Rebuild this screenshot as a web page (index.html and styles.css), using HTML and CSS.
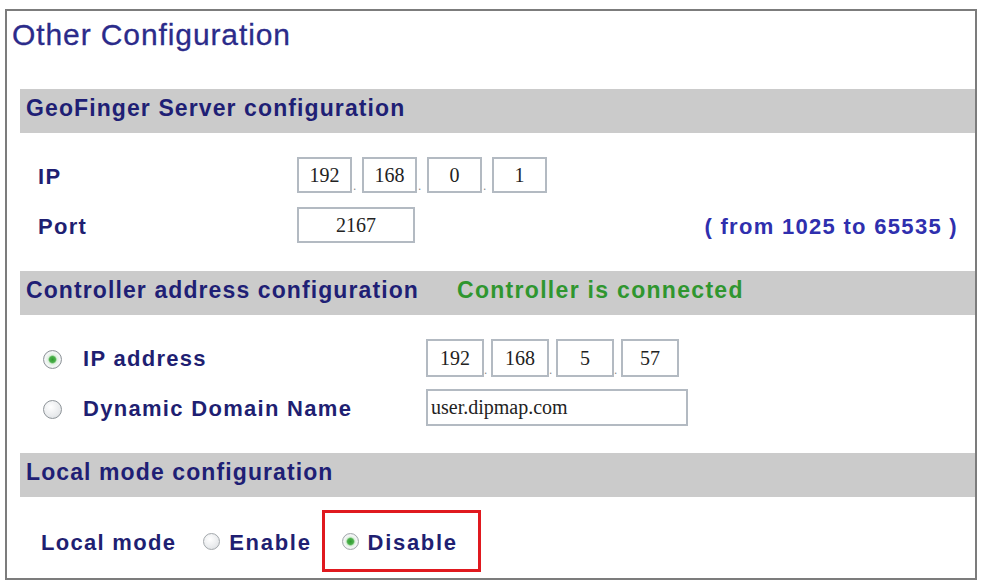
FILE: index.html
```html
<!DOCTYPE html>
<html lang="en">
  <head>
    <meta charset="UTF-8" />
    <meta name="viewport" content="width=device-width, initial-scale=1.0" />
    <link rel="stylesheet" href="styles.css">
    <title>Other Configuration</title>
  </head>
  <body>
    <div class="panel">
      <h1 class="title">Other Configuration</h1>

      <div class="bar first"><span>GeoFinger Server configuration</span></div>

      <div class="row">
        <label class="label">IP</label>
        <div class="ip">
          <input class="oct" type="text" value="192" /><span class="dot">.</span>
          <input class="oct" type="text" value="168" /><span class="dot">.</span>
          <input class="oct" type="text" value="0" /><span class="dot">.</span>
          <input class="oct" type="text" value="1" />
        </div>
      </div>
      <div class="row">
        <label class="label">Port</label>
        <input class="port" type="text" value="2167" />
        <span class="range">( from 1025 to 65535 )</span>
      </div>

      <div class="bar">
        <span>Controller address configuration</span>
        <span class="status">Controller is connected</span>
      </div>

      <div class="row ctrl">
        <input class="radio" type="radio" name="addr" id="byip" checked />
        <label class="label" for="byip">IP address</label>
        <div class="ip wide">
          <input class="oct" type="text" value="192" /><span class="dot">.</span>
          <input class="oct" type="text" value="168" /><span class="dot">.</span>
          <input class="oct" type="text" value="5" /><span class="dot">.</span>
          <input class="oct" type="text" value="57" />
        </div>
      </div>
      <div class="row ctrl">
        <input class="radio" type="radio" name="addr" id="byname" />
        <label class="label" for="byname">Dynamic Domain Name</label>
        <input class="domain" type="text" value="user.dipmap.com" />
      </div>

      <div class="bar"><span>Local mode configuration</span></div>

      <div class="local">
        <span class="local-label">Local mode</span>
        <input class="radio small" type="radio" name="local" id="enable" />
        <label for="enable" class="opt">Enable</label>
        <div class="mark">
          <input class="radio small" type="radio" name="local" id="disable" checked />
          <label for="disable" class="opt">Disable</label>
        </div>
      </div>
    </div>
  </body>
</html>
```

FILE: styles.css
```css
* {
  margin: 0;
  padding: 0;
  box-sizing: border-box;
}
body {
  background-color: #fff;
  font-family: "Liberation Sans", Arial, sans-serif;
}
.panel {
  margin: 9px 0 0 5px;
  width: 972px;
  border: 2px solid #7c7c7c;
  padding-bottom: 6px;
}
.title {
  font-size: 30px;
  font-weight: normal;
  line-height: 34px;
  padding: 7px 0 0 5px;
  color: #2b2b8a;
  letter-spacing: 0.9px;
  -webkit-text-stroke: 0.3px #2b2b8a;
}
.bar {
  display: flex;
  margin: 24px 0 0 13px;
  height: 44px;
  line-height: 39px;
  padding: 0 0 5px 6px;
  background-color: #cbcbcb;
  color: #1f1f75;
  font-size: 23px;
  font-weight: bold;
  letter-spacing: 1.1px;
  white-space: nowrap;
}
.bar.first {
  margin-top: 37px;
}
.bar .status {
  margin-left: 38px;
  color: #2f962f;
  letter-spacing: 1.3px;
}
.row {
  display: flex;
  align-items: flex-start;
  margin-top: 10px;
  padding: 0 17px 0 31px;
}
.bar + .row {
  margin-top: 24px;
}
.label {
  width: 259px;
  line-height: 40px;
  font-size: 22px;
  font-weight: bold;
  letter-spacing: 1.3px;
  color: #1f1f72;
}
.range {
  margin-left: auto;
  line-height: 40px;
  font-size: 22px;
  font-weight: bold;
  letter-spacing: 1.3px;
  color: #2f2fae;
}
input[type="text"] {
  height: 36px;
  border: 2px solid #b3bac2;
  background-color: #fff;
  font-family: "Liberation Serif", "Times New Roman", serif;
  font-size: 20px;
  color: #222;
  outline: none;
}
.ip {
  display: flex;
}
.oct {
  width: 55px;
  text-align: center;
}
.dot {
  width: 10px;
  align-self: flex-end;
  font-size: 12px;
  line-height: 14px;
  color: #888;
  text-indent: 1px;
}
.ip.wide .oct {
  width: 58px;
  height: 38px;
}
.ip.wide .dot {
  width: 7px;
  text-indent: 0;
}
.port {
  width: 118px;
  text-align: center;
}
.domain {
  width: 262px;
  height: 37px !important;
  padding-left: 3px;
}
.ctrl {
  padding-left: 36px;
}
.ctrl .label {
  width: 343px;
}
.radio {
  appearance: none;
  flex: none;
  width: 19px;
  height: 19px;
  margin: 11px 21px 0 0;
  border: 1px solid #8e9499;
  border-radius: 50%;
  background: radial-gradient(circle at 40% 35%, #ffffff 0%, #e9ebed 60%, #d4d7da 100%);
}
.radio:checked {
  background: radial-gradient(circle, #2f9c2f 0, #4cb04c 3px, #dff0df 4.5px, #f4f6f7 60%, #d4d7da 100%);
}
.radio.small {
  width: 17px;
  height: 17px;
  margin: 0 9px 0 0;
  border-color: #a3a8ac;
}
.local {
  display: flex;
  align-items: center;
  margin-top: 13px;
  padding-left: 34px;
  height: 62px;
}
.local-label,
.opt {
  font-size: 22px;
  font-weight: bold;
  letter-spacing: 1.3px;
  color: #1f1f72;
  padding-top: 3px;
}
.opt {
  letter-spacing: 1.7px;
}
.local-label {
  margin-right: 27px;
}
.mark {
  display: flex;
  align-items: center;
  height: 62px;
  margin-left: 10px;
  padding: 0 20px 0 17px;
  border: 3px solid #e0191f;
}
```
